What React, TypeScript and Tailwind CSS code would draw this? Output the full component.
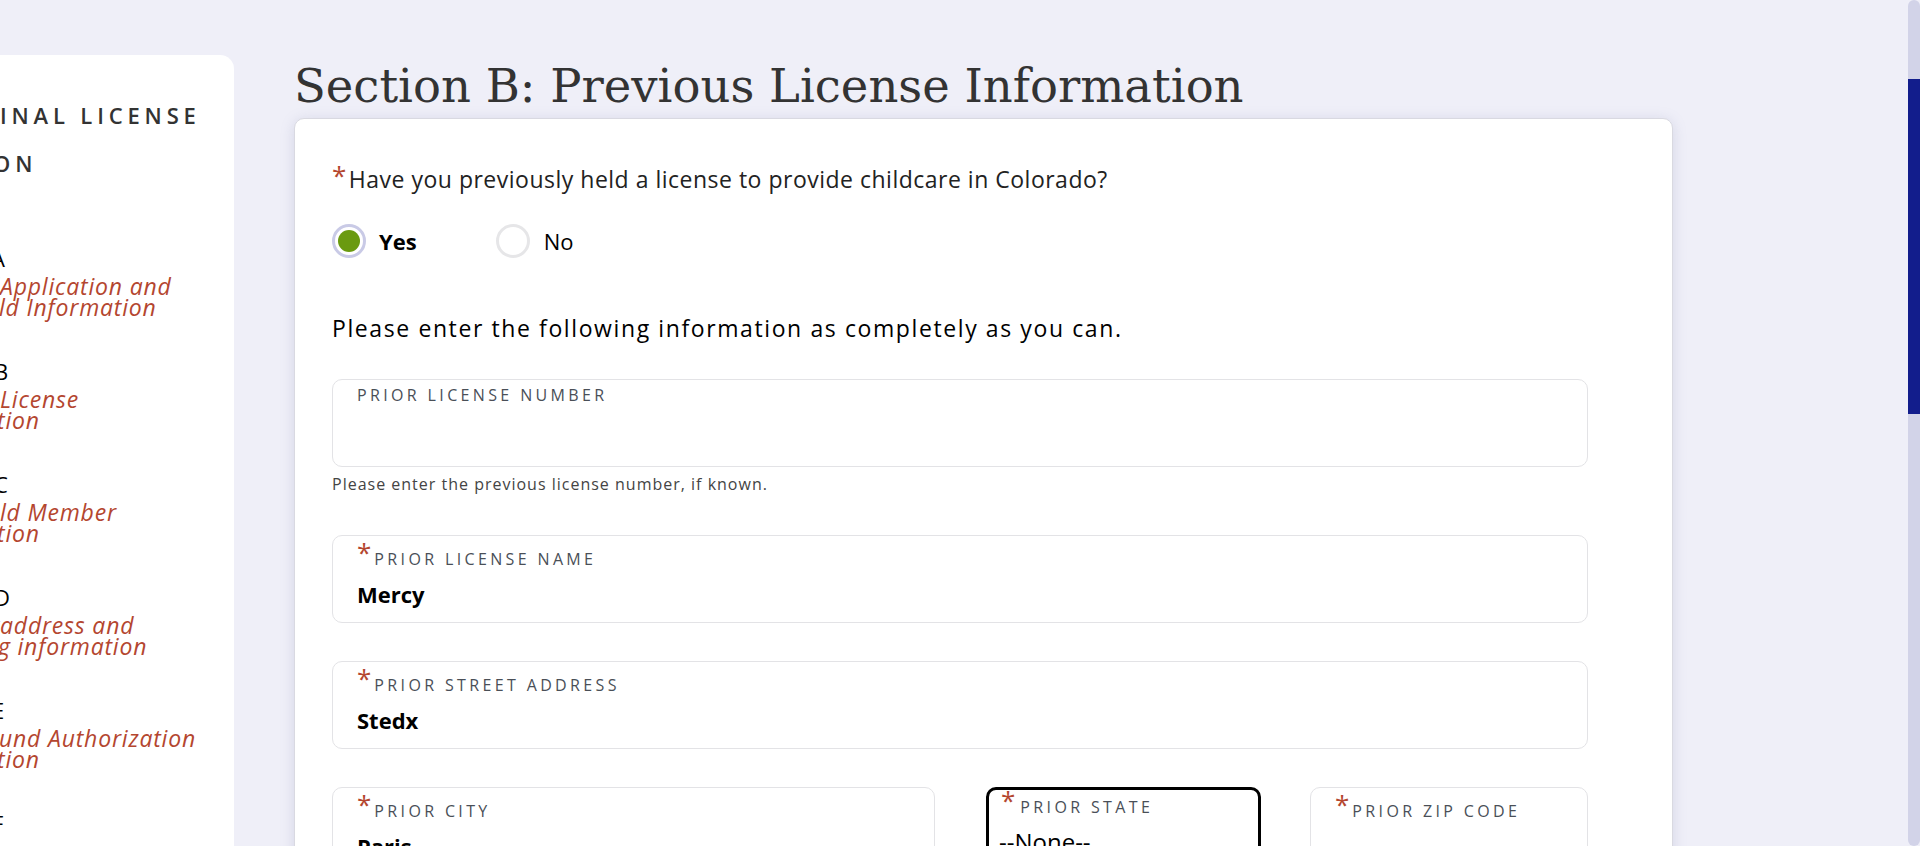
import React from "react";

const body = "font-['Open_Sans','Lato',sans-serif]";

function Clip({ hidden, shown, shift = "" }: { hidden: string; shown: string; shift?: string }) {
  // the hidden part overflows to the left of the card edge
  return (
    <div className="flex whitespace-nowrap">
      <span className="w-0 flex justify-end">{hidden}</span>
      <span className={shift}>{shown}</span>
    </div>
  );
}

const sections = [
  { letter: "A", shift: "-ml-[9px]", lines: [["Original ", "Application and", ""], ["Househo", "ld Information", "-ml-[1px]"]] },
  { letter: "B", shift: "-ml-[6px]", lines: [["Previous", " License", ""], ["Informa", "tion", "-ml-[3px]"]] },
  { letter: "C", shift: "-ml-[6px]", lines: [["Househo", "ld Member", ""], ["Informa", "tion", "-ml-[3px]"]] },
  { letter: "D", shift: "-ml-[6px]", lines: [["Facility", " address and", ""], ["Mailin", "g information", "-ml-[2px]"]] },
  { letter: "E", shift: "-ml-[8px]", lines: [["Backgro", "und Authorization", "-ml-[1px]"], ["Informa", "tion", "-ml-[3px]"]] },
  { letter: "F", shift: "-ml-[8px]", lines: [] as string[][] },
];

function Star({ className = "" }: { className?: string }) {
  return <span className={`text-[#b4462f] ${className}`}>*</span>;
}

function Field({ label, value, required = true, className = "", selected = false }: {
  label: string;
  value?: string;
  required?: boolean;
  className?: string;
  selected?: boolean;
}) {
  return (
    <div
      className={`h-[88px] rounded-[10px] bg-white ${
        selected ? "border-[3px] border-black pl-[10px] pt-0" : "border border-[#e3e3e6] pl-6 pt-[6px]"
      } ${className}`}
    >
      <div className={`flex items-start ${selected ? "pl-[2px]" : ""}`}>
        {required && <Star className={`text-[26px] leading-[20px] ${selected ? "mr-[5px]" : "mr-[3px]"}`} />}
        <span className={`${required ? "mt-[8px]" : ""} text-[16px] leading-[18px] tracking-[0.21em] uppercase text-[#4a4f57]`}>
          {label}
        </span>
      </div>
      {value && (
        <div
          className={`mt-[12px] leading-[28px] text-black ${selected ? "text-[24px] font-normal" : "text-[22px] font-bold"}`}
        >
          {value}
        </div>
      )}
    </div>
  );
}

export default function App() {
  return (
    <div className={`relative h-[846px] overflow-hidden bg-[#efeff8] flex ${body}`}>
      {/* Left navigation */}
      <aside className="w-[234px] shrink-0 mt-[55px] bg-white rounded-tr-[14px] overflow-hidden">
        <div className="pt-[36px] text-[22px] font-semibold tracking-[0.22em] text-[#333] leading-[48px]">
          <Clip hidden="ORIG" shown="INAL LICENSE" />
          <Clip hidden="APPLICATI" shown="ON" shift="-ml-[7px]" />
        </div>
        <div className="mt-[58px] flex flex-col gap-[40px] text-[22px]">
          {sections.map((s) => (
            <div key={s.letter}>
              <div className="leading-[26px] text-black">
                <Clip hidden="Section " shown={s.letter} shift={s.shift} />
              </div>
              <div className="mt-[5px] italic text-[23px] tracking-[0.8px] text-[#b4462f] leading-[21px]">
                {s.lines.map((l, i) => (
                  <Clip key={i} hidden={l[0]} shown={l[1]} shift={l[2]} />
                ))}
              </div>
            </div>
          ))}
        </div>
      </aside>

      {/* Main content */}
      <main className="ml-[60px] w-[1379px] shrink-0">
        <h1 className="mt-[58px] mb-[4px] font-['DejaVu_Serif',serif] text-[46.5px] leading-[56px] text-[#333]">
          Section B: Previous License Information
        </h1>
        <div className="h-[900px] bg-white rounded-[10px] border border-[#d9d9e1] shadow-[0_2px_14px_rgba(120,125,170,0.22)] pl-[37px] pt-[46px]">
          <div className="w-[1256px]">
            <p className="text-[23px] leading-[28px] tracking-[0.5px] text-[#222]">
              <Star className="text-[26px] align-top leading-[20px] mr-[2px]" />
              Have you previously held a license to provide childcare in Colorado?
            </p>

            <div className="mt-[31px] flex items-center h-[34px]">
              <label className="flex items-center">
                <span className="w-[34px] h-[34px] rounded-full border-[3px] border-[#c9cae6] flex items-center justify-center">
                  <span className="w-[22px] h-[22px] rounded-full bg-[#6a9a10]" />
                </span>
                <span className="ml-[13px] text-[22px] font-bold text-black">Yes</span>
              </label>
              <label className="flex items-center ml-[79px]">
                <span className="w-[34px] h-[34px] rounded-full border-[3px] border-[#e6e6e8] bg-white" />
                <span className="ml-[14px] text-[22px] text-black">No</span>
              </label>
            </div>

            <p className="mt-[56px] text-[23px] leading-[28px] tracking-[1.6px] text-black">
              Please enter the following information as completely as you can.
            </p>

            <Field className="mt-[37px]" label="Prior License Number" required={false} />
            <p className="mt-[7px] text-[16px] leading-[20px] tracking-[1px] text-[#444]">
              Please enter the previous license number, if known.
            </p>

            <Field className="mt-[41px]" label="Prior License Name" value="Mercy" />
            <Field className="mt-[38px]" label="Prior Street Address" value="Stedx" />

            <div className="mt-[38px] flex">
              <Field className="w-[603px]" label="Prior City" value="Paris" />
              <Field className="w-[275px] ml-[51px]" label="Prior State" value="--None--" selected />
              <Field className="w-[278px] ml-[49px]" label="Prior Zip Code" />
            </div>
          </div>
        </div>
      </main>

      {/* Page scrollbar */}
      <div className="absolute right-0 top-0 h-full w-[12px] rounded-full bg-[#d2d3e8]">
        <div className="mt-[79px] h-[335px] bg-[#121d8c]" />
      </div>
    </div>
  );
}
